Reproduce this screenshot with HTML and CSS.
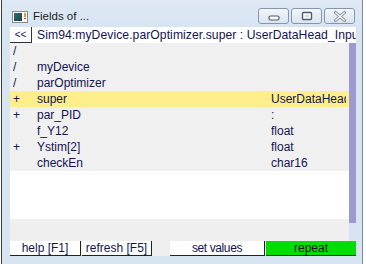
FILE: index.html
```html
<!DOCTYPE html>
<html>
<head>
<meta charset="utf-8">
<link rel="stylesheet" href="styles.css">
</head>
<body>
<div class="screen">
  <div class="win">
    <div class="titlebar">
      <svg class="appicon" width="16" height="12" viewBox="0 0 16 12">
        <rect x="0.5" y="0.5" width="15" height="11" fill="#ffffff" stroke="#8a8a8a"/>
        <defs>
          <linearGradient id="g1" x1="0" y1="0" x2="1" y2="1">
            <stop offset="0" stop-color="#2f6f6a"/>
            <stop offset="1" stop-color="#1d3f4a"/>
          </linearGradient>
        </defs>
        <rect x="2" y="2" width="8" height="8" fill="url(#g1)"/>
        <rect x="12" y="2" width="2" height="4" fill="#d9a520"/>
        <rect x="12" y="7" width="2" height="1" fill="#c04040"/>
      </svg>
      <span class="title">Fields of ...</span>
      <div class="caps">
        <div class="cap">
          <svg width="12" height="6" viewBox="0 0 12 6"><rect x="1" y="1" width="10" height="4" rx="1.5" fill="#fff" stroke="#4e5b6e" stroke-width="1.2"/></svg>
        </div>
        <div class="cap">
          <svg width="12" height="10" viewBox="0 0 12 10"><rect x="1.5" y="1.5" width="9" height="7" rx="1" fill="#fff" stroke="#4e5b6e" stroke-width="1.4"/><rect x="4" y="4" width="4" height="2" fill="#cfd8e4"/></svg>
        </div>
        <div class="cap">
          <svg width="14" height="11" viewBox="0 0 14 11"><path d="M2.5 1.5 L11.5 9.5 M11.5 1.5 L2.5 9.5" stroke="#6a7689" stroke-width="3" stroke-linecap="round"/><path d="M2.5 1.5 L11.5 9.5 M11.5 1.5 L2.5 9.5" stroke="#ffffff" stroke-width="1.4" stroke-linecap="round"/></svg>
        </div>
      </div>
    </div>
    <div class="client">
      <div class="pathbar">
        <div class="back">&lt;&lt;</div>
        <div class="path">Sim94:myDevice.parOptimizer.super : UserDataHead_Input</div>
      </div>
      <div class="main">
        <div class="leftcol">
          <div class="list">
            <div class="row"><span class="mark">/</span><span class="name"></span><span class="type"></span></div>
            <div class="row"><span class="mark">/</span><span class="name">myDevice</span><span class="type"></span></div>
            <div class="row"><span class="mark">/</span><span class="name">parOptimizer</span><span class="type"></span></div>
            <div class="row sel"><span class="mark">+</span><span class="name">super</span><span class="type">UserDataHead_Input</span></div>
            <div class="row"><span class="mark">+</span><span class="name">par_PID</span><span class="type">:</span></div>
            <div class="row"><span class="mark"></span><span class="name">f_Y12</span><span class="type">float</span></div>
            <div class="row"><span class="mark">+</span><span class="name">Ystim[2]</span><span class="type">float</span></div>
            <div class="row"><span class="mark"></span><span class="name">checkEn</span><span class="type">char16</span></div>
            <div class="fill"></div>
          </div>
          <div class="strip"></div>
        </div>
        <div class="scroll"></div>
      </div>
      <div class="btns">
        <div class="btn w-help">help [F1]</div>
        <div class="btn w-refresh">refresh [F5]</div>
        <div class="btn w-set">set values</div>
        <div class="btn w-repeat">repeat</div>
      </div>
    </div>
  </div>
</div>
</body>
</html>
```

FILE: styles.css
```css
* { box-sizing: border-box; }
html, body {
  margin: 0;
  padding: 0;
  background: #ffffff;
  overflow: hidden;
}
.screen {
  width: 366px;
  height: 264px;
  overflow: hidden;
  background: #ffffff;
  font-family: "Liberation Sans", Arial, sans-serif;
  font-size: 12px;
  color: #141450;
}
.win {
  margin-left: 1px;
  width: 362px;
  height: 264px;
  background: #d7e4f2;
  border-left: 1px solid #3c3c3c;
  border-right: 1px solid #7d8a9b;
  display: flex;
  flex-direction: column;
}
.titlebar {
  height: 27px;
  display: flex;
  align-items: flex-start;
  padding-left: 10px;
  background: linear-gradient(#dfe9f5, #d7e4f2);
}
.appicon {
  margin-top: 11px;
  flex: none;
}
.title {
  margin-left: 5px;
  margin-top: 9px;
  font-size: 11.5px;
  line-height: 14px;
  color: #222;
}
.caps {
  margin-left: auto;
  margin-right: 7px;
  margin-top: 8px;
  display: flex;
  gap: 2px;
}
.cap {
  width: 31px;
  height: 16px;
  border: 1px solid #8795ab;
  border-radius: 3px;
  background: linear-gradient(#f3f6fa, #dbe4ef);
  display: flex;
  align-items: center;
  justify-content: center;
}
.cap:first-child svg { margin-top: 4px; }
.client {
  padding: 0 6px 0 8px;
  display: flex;
  flex-direction: column;
}
.pathbar {
  height: 16px;
  display: flex;
  background: #ffffff;
}
.back {
  width: 22px;
  height: 16px;
  flex: none;
  border-right: 1px solid #333;
  border-bottom: 1px solid #333;
  background: #fff;
  font-size: 10px;
  line-height: 15px;
  text-align: center;
  color: #141450;
}
.path {
  padding-left: 5px;
  white-space: nowrap;
  overflow: hidden;
  line-height: 16px;
  font-size: 12.2px;
  letter-spacing: 0.05px;
}
.main {
  height: 198px;
  display: flex;
}
.leftcol {
  width: 339px;
  display: flex;
  flex-direction: column;
}
.list {
  height: 176px;
  background: #ffffff;
  display: flex;
  flex-direction: column;
}
.row {
  height: 16px;
  line-height: 16px;
  display: grid;
  grid-template-columns: 27px 234px 75px 3px;
  background: #f0f0f0;
  white-space: nowrap;
}
.row.sel { background: #ffee8c; }
.mark { padding-left: 3px; }
.type { overflow: hidden; }
.fill { flex: 1; background: #ffffff; }
.strip {
  height: 22px;
  background: #efefef;
}
.scroll {
  width: 7px;
  height: 180px;
  background: #9b9bcf;
}
.btns {
  height: 15px;
  display: flex;
  gap: 1px;
  background: #efefef;
}
.btn {
  height: 15px;
  background: #ffffff;
  border-right: 1px solid #222;
  border-bottom: 1px solid #222;
  text-align: center;
  line-height: 14px;
  white-space: nowrap;
  overflow: hidden;
}
.w-help { width: 71px; }
.w-refresh { width: 70px; }
.w-set { width: 95px; margin-left: 17px; letter-spacing: -0.4px; }
.w-repeat { width: 90px; background: #00dd00; color: #111; border-right: none; }
```
